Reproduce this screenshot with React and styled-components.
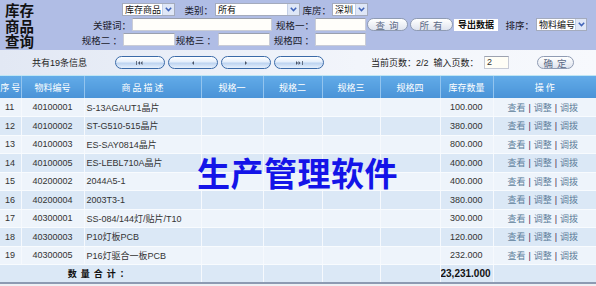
import React from "react";
import styled, { createGlobalStyle } from "styled-components";

const GlobalStyle = createGlobalStyle`
    body {
        margin: 0;
        background: #eef0f4;
        font-family: "Liberation Sans", "Noto Sans CJK SC", sans-serif;
    }
`;

const rows = [
    ["11", "40100001", "S-13AGAUT1晶片", "100.000"],
    ["12", "40100002", "ST-G510-515晶片", "380.000"],
    ["13", "40100003", "ES-SAY0814晶片", "800.000"],
    ["14", "40100005", "ES-LEBL710A晶片", "400.000"],
    ["15", "40200002", "2044A5-1", "400.000"],
    ["16", "40200004", "2003T3-1", "380.000"],
    ["17", "40300001", "SS-084/144灯/贴片/T10", "300.000"],
    ["18", "40300003", "P10灯板PCB", "120.000"],
    ["19", "40300005", "P16灯驱合一板PCB", "232.000"],
];

const columns = [
    { title: "序 号", width: 21 },
    { title: "物料编号", width: 63 },
    { title: "商 品 描 述", width: 117 },
    { title: "规格一", width: 62 },
    { title: "规格二", width: 59 },
    { title: "规格三", width: 58 },
    { title: "规格四", width: 60 },
    { title: "库存数量", width: 53 },
    { title: "操 作", width: 103 },
];

const Chevron = () => (
    <svg width="7" height="5" viewBox="0 0 7 5">
        <path d="M0.8 0.8 L3.5 3.6 L6.2 0.8" fill="none" stroke="#3f63b8" strokeWidth="1.5" />
    </svg>
);

const NavIcon = ({ kind }) => {
    const tri = (x, dir) =>
        dir < 0 ? `M${x} 0 L${x} 4 L${x - 2} 2 Z` : `M${x} 0 L${x} 4 L${x + 2} 2 Z`;
    let d = "";
    if (kind === "first") d = "M0 0 H0.8 V4 H0 Z " + tri(4, -1) + " " + tri(6.5, -1);
    if (kind === "prev") d = tri(5, -1);
    if (kind === "next") d = tri(3, 1);
    if (kind === "last") d = tri(1, 1) + " " + tri(3.5, 1) + " M7.2 0 H8 V4 H7.2 Z";
    return (
        <svg width="8" height="4" viewBox="0 0 8 4">
            <path d={d} fill="#4a5568" />
        </svg>
    );
};

const Select = ({ value, w, ml }) => (
    <SelectBox $w={w} $ml={ml}>
        <span>{value}</span>
        <SelectArrow>
            <Chevron />
        </SelectArrow>
    </SelectBox>
);

const App = () => {
    return (
        <Page>
            <GlobalStyle />
            <SearchPanel>
                <Title>
                    <TitleLine>库存</TitleLine>
                    <TitleLine>商品</TitleLine>
                    <TitleLine>查询</TitleLine>
                </Title>
                <Form>
                    <FormRow>
                        <Select value="库存商品" w={53} ml={62} />
                        <Label $w={38}>类别：</Label>
                        <Select value="所有" w={85} ml={2} />
                        <Label $w={31}>库房：</Label>
                        <Select value="深圳" w={36} ml={1} />
                    </FormRow>
                    <FormRow>
                        <Label $w={71}>关键词：</Label>
                        <Input $w={140} $ml={1} />
                        <Label $w={42}>规格一：</Label>
                        <Input $w={51} $ml={1} />
                        <PillButton $w={41} $ml={1}>查 询</PillButton>
                        <PillButton $w={43} $ml={2}>所 有</PillButton>
                        <ExportButton>导出数据</ExportButton>
                        <Label $w={36}>排序：</Label>
                        <Select value="物料编号" w={51} ml={2} />
                    </FormRow>
                    <FormRow>
                        <Label $w={62}>规格二 ：</Label>
                        <Input $w={52} $ml={1} />
                        <Label $w={41}>规格三 ：</Label>
                        <Input $w={52} $ml={2} />
                        <Label $w={44}>规格四 ：</Label>
                        <Input $w={51} $ml={1} />
                    </FormRow>
                </Form>
            </SearchPanel>

            <PagerBar>
                <PagerInfo>共有19条信息</PagerInfo>
                <NavGroup>
                    {["first", "prev", "next", "last"].map((k) => (
                        <NavButton key={k}>
                            <NavIcon kind={k} />
                        </NavButton>
                    ))}
                </NavGroup>
                <PageText>当前页数：2/2&nbsp; 输入页数：</PageText>
                <PageInput>2</PageInput>
                <PillButton $w={37} $ml={28}>确 定</PillButton>
            </PagerBar>

            <Table>
                <colgroup>
                    {columns.map((c) => (
                        <col key={c.title} style={{ width: c.width }} />
                    ))}
                </colgroup>
                <thead>
                    <tr>
                        {columns.map((c) => (
                            <HeadCell key={c.title}>{c.title}</HeadCell>
                        ))}
                    </tr>
                </thead>
                <tbody>
                    {rows.map((r, i) => (
                        <Row key={r[0]} $alt={i % 2 === 1}>
                            <Cell $pl={5}>{r[0]}</Cell>
                            <Cell $pl={11}>{r[1]}</Cell>
                            <Cell $pl={2}>{r[2]}</Cell>
                            <Cell />
                            <Cell />
                            <Cell />
                            <Cell />
                            <NumCell>{r[3]}</NumCell>
                            <OpsCell>
                                <Link>查看</Link>
                                <Sep>|</Sep>
                                <Link>调整</Link>
                                <Sep>|</Sep>
                                <Link>调拨</Link>
                            </OpsCell>
                        </Row>
                    ))}
                    <Row $alt>
                        <TotalLabel colSpan={3}>数量合计：</TotalLabel>
                        <Cell />
                        <Cell />
                        <Cell />
                        <Cell />
                        <NumCell $bold>23,231.000</NumCell>
                        <Cell />
                    </Row>
                </tbody>
            </Table>

            <Watermark>生产管理软件</Watermark>
        </Page>
    );
};

const Page = styled.div`
    position: relative;
    width: 596px;
    height: 286px;
    overflow: hidden;
    background: #eef0f4;
`;

const SearchPanel = styled.div`
    display: flex;
    height: 50px;
    background: #b0bde5;
`;

const Title = styled.div`
    width: 60px;
    padding: 2px 0 0 5px;
    box-sizing: border-box;
    display: flex;
    flex-direction: column;
`;

const TitleLine = styled.div`
    height: 15.5px;
    font-family: "Noto Sans CJK SC", sans-serif;
    font-weight: 700;
    font-size: 14.5px;
    line-height: 15.5px;
    color: #111;
`;

const Form = styled.div`
    display: flex;
    flex-direction: column;
    padding-top: 2px;
`;

const FormRow = styled.div`
    display: flex;
    align-items: center;
    height: 15px;
`;

const Label = styled.span`
    width: ${(p) => p.$w}px;
    flex: none;
    text-align: right;
    font-family: "Noto Sans CJK SC", sans-serif;
    font-size: 9.5px;
    line-height: 12px;
    color: #1a1a2a;
    white-space: nowrap;
`;

const Input = styled.div`
    width: ${(p) => p.$w}px;
    margin-left: ${(p) => p.$ml || 0}px;
    flex: none;
    height: 13px;
    box-sizing: border-box;
    background: #fffefa;
    border: 1px solid #c9ccd6;
    border-top-color: #9aa0ae;
`;

const SelectBox = styled.div`
    width: ${(p) => p.$w}px;
    margin-left: ${(p) => p.$ml || 0}px;
    flex: none;
    height: 13px;
    box-sizing: border-box;
    display: flex;
    align-items: center;
    justify-content: space-between;
    padding-left: 2px;
    background: #fff;
    border: 1px solid #a4abbd;
    font-family: "Noto Sans CJK SC", sans-serif;
    font-size: 9px;
    line-height: 10px;
    color: #111;
    white-space: nowrap;
    overflow: hidden;
`;

const SelectArrow = styled.span`
    width: 11px;
    height: 11px;
    flex: none;
    display: flex;
    align-items: center;
    justify-content: center;
    background: #dfe7f7;
    border-left: 1px solid #c3cfe6;
`;

const PillButton = styled.div`
    width: ${(p) => p.$w}px;
    margin-left: ${(p) => p.$ml || 0}px;
    flex: none;
    height: 13px;
    box-sizing: border-box;
    display: flex;
    align-items: center;
    justify-content: center;
    border: 1px solid #8f9bb3;
    border-radius: 7px;
    background: linear-gradient(#ffffff, #dfe4ee);
    font-family: "Noto Sans CJK SC", sans-serif;
    font-size: 9.5px;
    letter-spacing: 1px;
    color: #5c6a86;
    white-space: nowrap;
`;

const ExportButton = styled.div`
    width: 44px;
    height: 12px;
    margin-left: 1px;
    flex: none;
    display: flex;
    align-items: center;
    justify-content: center;
    background: #fff;
    font-family: "Noto Sans CJK SC", sans-serif;
    font-size: 9px;
    font-weight: 700;
    color: #111;
`;

const PagerBar = styled.div`
    display: flex;
    align-items: center;
    height: 25px;
    padding-left: 32px;
    background: linear-gradient(90deg, #e2e8f4, #f2f5fb 60%, #f7f9fd);
    border-bottom: 1px solid #bfe6f4;
`;

const PagerInfo = styled.span`
    width: 83px;
    font-family: "Liberation Sans", "Noto Sans CJK SC", sans-serif;
    font-size: 9px;
    color: #222;
`;

const NavGroup = styled.div`
    display: flex;
    gap: 3px;
`;

const NavButton = styled.div`
    width: 50px;
    height: 13px;
    box-sizing: border-box;
    display: flex;
    align-items: center;
    justify-content: center;
    border: 1px solid #3a6aa8;
    border-radius: 7px;
    background: linear-gradient(#ffffff 0%, #e4eefb 45%, #bcd3f0 55%, #e6f0fc 100%);
`;

const PageText = styled.span`
    margin-left: 47px;
    width: 111px;
    font-family: "Liberation Sans", "Noto Sans CJK SC", sans-serif;
    font-size: 9px;
    color: #222;
    white-space: nowrap;
`;

const PageInput = styled.div`
    width: 25px;
    height: 13px;
    margin-left: 2px;
    box-sizing: border-box;
    padding-left: 2px;
    background: #fffef6;
    border: 1px solid #c7cbd6;
    border-top-color: #9ca2b0;
    font-size: 9px;
    line-height: 11px;
    color: #333;
`;

const Table = styled.table`
    width: 596px;
    table-layout: fixed;
    border-collapse: collapse;
    border-bottom: 2px solid #8d9ab2;
`;

const HeadCell = styled.th`
    height: 22px;
    padding: 0;
    background: linear-gradient(#62abe8, #4a93d7);
    border-right: 1px solid #93c4ee;
    font-family: "Noto Sans CJK SC", sans-serif;
    font-size: 9px;
    font-weight: 400;
    color: #fff;
    text-align: center;
    white-space: nowrap;
    &:last-child {
        border-right: none;
    }
`;

const Row = styled.tr`
    height: 18.5px;
    background: ${(p) => (p.$alt ? "#dbe8f6" : "#eef4fb")};
`;

const Cell = styled.td`
    padding: 0 0 0 ${(p) => p.$pl || 0}px;
    border-right: 1px solid #f6f9fd;
    border-bottom: 1px solid #f8fbfe;
    font-family: "Liberation Sans", "Noto Sans CJK SC", sans-serif;
    font-size: 9px;
    color: #333;
    white-space: nowrap;
    overflow: hidden;
`;

const NumCell = styled(Cell)`
    padding-right: 10px;
    text-align: right;
    font-weight: ${(p) => (p.$bold ? 700 : 400)};
    font-size: ${(p) => (p.$bold ? 10 : 9)}px;
    color: ${(p) => (p.$bold ? "#111" : "#333")};
`;

const OpsCell = styled(Cell)`
    text-align: center;
    padding-right: 4px;
    border-right: none;
`;

const Link = styled.span`
    font-family: "Noto Sans CJK SC", sans-serif;
    color: #5f7f9c;
`;

const Sep = styled.span`
    margin: 0 3px;
    color: #4b2a4f;
`;

const TotalLabel = styled(Cell)`
    text-align: center;
    font-family: "Noto Sans CJK SC", sans-serif;
    font-weight: 700;
    letter-spacing: 4px;
    color: #111;
`;

const Watermark = styled.div`
    position: absolute;
    left: 197px;
    top: 152px;
    font-family: "Noto Sans CJK SC", sans-serif;
    font-weight: 700;
    font-size: 33px;
    line-height: 40px;
    color: #1414e8;
    letter-spacing: 0.5px;
    white-space: nowrap;
`;

export default App;
